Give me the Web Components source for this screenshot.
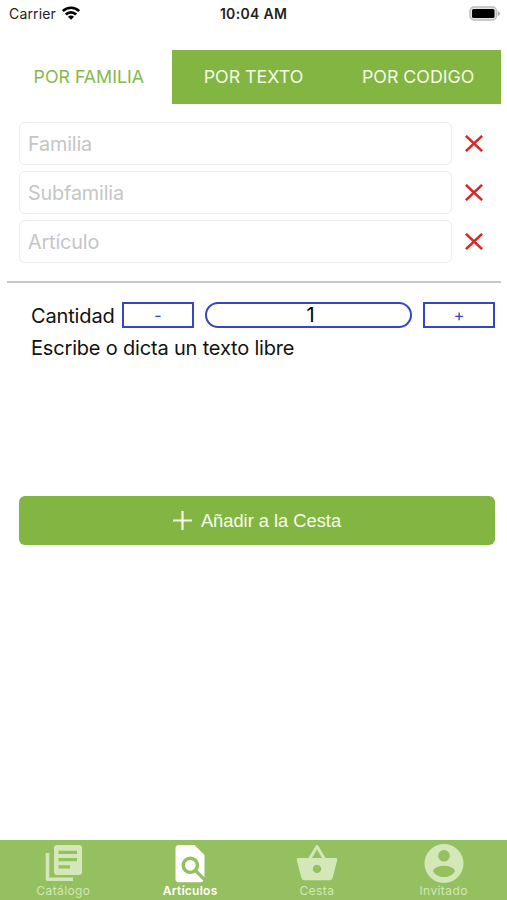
<!DOCTYPE html>
<html lang="es">
<head>
<meta charset="utf-8">
<title>Artículos</title>
<style>
  body {
    margin: 0;
    background: #fff;
    font-family: Inter, "Liberation Sans", sans-serif;
    color: #111;
  }
</style>
</head>
<body>
<articulos-app></articulos-app>

<script>
class StatusBar extends HTMLElement {
  constructor() {
    super();
    this.attachShadow({ mode: 'open' }).innerHTML = `
      <style>
        :host {
          display: grid;
          grid-template-columns: 1fr auto 1fr;
          align-items: center;
          box-sizing: border-box;
          height: 28px;
          padding: 0 7px 0 9px;
          font-size: 14px;
          line-height: 28px;
          color: #222;
        }
        .left { display: flex; align-items: center; gap: 6px; }
        .carrier { letter-spacing: 0.15px; }
        .time { font-size: 14px; font-weight: 600; letter-spacing: 0.3px; margin-right: 2px; }
        .left svg { margin-top: -3px; }
        .battery { justify-self: end; margin-top: -2px; }
        svg { display: block; }
      </style>
      <div class="left">
        <span class="carrier">Carrier</span>
        <svg width="18" height="14" viewBox="0 0 18 14" fill="none" stroke="#000" stroke-width="2.7">
          <path d="M.9 5.1C5.4.6 12.6.6 17.1 5.1"/>
          <path d="M3.8 8.5C6.7 5.6 11.3 5.6 14.2 8.5"/>
          <path d="M5.9 10.7C7.7 9.1 10.3 9.1 12.1 10.7L9 13.8Z" fill="#000" stroke="none"/>
        </svg>
      </div>
      <span class="time">10:04 AM</span>
      <svg class="battery" width="31" height="15" viewBox="0 0 31 15">
        <rect x="1" y="1" width="26.5" height="13" rx="4" fill="#e4e4e4" stroke="#bcbcbc" stroke-width="1.4"/>
        <rect x="3" y="3" width="22.5" height="9" rx="1.5" fill="#000"/>
        <path d="M28.8 5Q31 6 31 7.5T28.8 10Z" fill="#aaa"/>
      </svg>
    `;
  }
}

class SegmentTabs extends HTMLElement {
  constructor() {
    super();
    this.attachShadow({ mode: 'open' }).innerHTML = `
      <style>
        :host {
          display: grid;
          grid-template-columns: repeat(3, 1fr);
          height: 54px;
          margin: 22px 6px 0 7px;
        }
        ::slotted(*) {
          display: flex;
          align-items: center;
          justify-content: center;
          box-sizing: border-box;
          padding: 0 1px 1px 0;
          background: #82b541;
          color: #f6fbe9;
          font-size: 17.8px;
        }
        ::slotted([active]) {
          background: #fff;
          color: #86b74a;
        }
      </style>
      <slot></slot>
    `;
  }
}

class PickerField extends HTMLElement {
  constructor() {
    super();
    this.attachShadow({ mode: 'open' }).innerHTML = `
      <style>
        :host { display: flex; align-items: center; gap: 13px; }
        .box {
          box-sizing: border-box;
          width: 433px;
          height: 43px;
          padding-left: 8px;
          border: 1px solid #ececec;
          border-radius: 6px;
          font-size: 19.8px;
          line-height: 42px;
          letter-spacing: -0.15px;
          color: #c5c5c7;
        }
        svg { display: block; }
      </style>
      <div class="box"><slot></slot></div>
      <svg width="18" height="17" viewBox="0 0 18 17" stroke="#dc2626" stroke-width="2.6">
        <path d="M.9.9 17.1 16.1M17.1.9.9 16.1"/>
      </svg>
    `;
  }
}

class QuantityStepper extends HTMLElement {
  constructor() {
    super();
    this.attachShadow({ mode: 'open' }).innerHTML = `
      <style>
        :host {
          display: flex;
          align-items: center;
          height: 26px;
          margin: 18px 12px 0 31px;
          font-size: 20px;
          color: #111;
        }
        .label {
          width: 91px;
          box-sizing: border-box;
          padding-top: 1px;
          letter-spacing: -0.15px;
          white-space: nowrap;
        }
        .step, .value {
          box-sizing: border-box;
          height: 26px;
          border: 2.4px solid #3546c4;
          border-width: 2px;
          line-height: 23px;
          text-align: center;
        }
        .step { width: 72px; font-size: 16px; color: #3546c4; }
        .value { flex: 1; margin: 0 11px; padding-left: 4px; border-radius: 13px; color: #000; }
      </style>
      <span class="label"><slot></slot></span>
      <div class="step">-</div>
      <div class="value">1</div>
      <div class="step">+</div>
    `;
  }
}

class CartButton extends HTMLElement {
  constructor() {
    super();
    this.attachShadow({ mode: 'open' }).innerHTML = `
      <style>
        :host {
          display: flex;
          align-items: center;
          justify-content: center;
          gap: 9px;
          height: 49px;
          margin: 0 12px 0 19px;
          border-radius: 6px;
          background: #82b541;
          color: #f8fdec;
          font: 18.3px "Liberation Sans", Arial, sans-serif;
        }
        svg { display: block; }
      </style>
      <svg width="19" height="19" viewBox="0 0 19 19" stroke="#f8fdec" stroke-width="2.2">
        <path d="M9.5 0V19M0 9.5H19"/>
      </svg>
      <slot></slot>
    `;
  }
}

const icons = {
  catalogo: `
    <path d="M5.5 11V37.2H31" fill="none" stroke="currentColor" stroke-width="3.6" stroke-linejoin="round"/>
    <path fill="currentColor" fill-rule="evenodd" d="M15 3H37Q40 3 40 6V30Q40 33 37 33H15Q12 33 12 30V6Q12 3 15 3ZM16.5 8.8V12H35V8.8ZM16.5 16V19.2H35V16ZM16.5 23.3V26.5H28V23.3Z"/>`,
  articulos: `
    <path fill="currentColor" d="M10 3H25.5L35.5 13V37.5L33.5 39.6Q33 40.2 32 40.2H10Q6.5 40.2 6.5 37V6.5Q6.5 3 10 3Z"/>
    <path fill="none" stroke="#95c05f" stroke-width="3.4" d="M21.3 16.2A7.1 7.1 0 1 0 21.3 30.4A7.1 7.1 0 1 0 21.3 16.2M26.3 28.4 36.8 38.9"/>`,
  cesta: `
    <path fill="none" stroke="currentColor" stroke-width="3" stroke-linejoin="round" d="M13.6 17 21 4.6 28.4 17"/>
    <path fill="currentColor" fill-rule="evenodd" d="M2 16H40Q41.6 16 41.2 18L36.6 36Q35.8 38.2 33.5 38.2H8.5Q6.2 38.2 5.4 36L.8 18Q.4 16 2 16ZM21 22.7A4.2 4.2 0 1 0 21 31.1A4.2 4.2 0 1 0 21 22.7Z"/>`,
  invitado: `
    <path fill="currentColor" fill-rule="evenodd" d="M21 2A19.5 19.5 0 1 0 21 41A19.5 19.5 0 1 0 21 2ZM21 8A5.8 5.8 0 1 1 21 19.6A5.8 5.8 0 1 1 21 8ZM21 23.8C25 23.8 32 25.8 32 29.5C29.8 33 25.8 35 21 35S12.2 33 10 29.5C10 25.8 17 23.8 21 23.8Z"/>`
};

class NavItem extends HTMLElement {
  constructor() {
    super();
    this.attachShadow({ mode: 'open' }).innerHTML = `
      <style>
        :host {
          display: flex;
          flex-direction: column;
          align-items: center;
          padding-top: 2px;
          color: #d3e7b9;
          font-size: 12px;
          line-height: 14px;
          letter-spacing: 0.4px;
        }
        :host([active]) { color: #fff; font-weight: 600; letter-spacing: 0.25px; }
        svg { display: block; }
      </style>
      <svg width="42" height="42" viewBox="0 0 42 42">${icons[this.getAttribute('icon')]}</svg>
      <slot></slot>
    `;
  }
}

class BottomNav extends HTMLElement {
  constructor() {
    super();
    this.attachShadow({ mode: 'open' }).innerHTML = `
      <style>
        :host {
          display: grid;
          grid-template-columns: repeat(4, 1fr);
          height: 60px;
          background: #95c05f;
        }
      </style>
      <slot></slot>
    `;
  }
}

class ArticulosApp extends HTMLElement {
  constructor() {
    super();
    this.attachShadow({ mode: 'open' }).innerHTML = `
      <style>
        :host {
          display: flex;
          flex-direction: column;
          height: 900px;
          overflow: hidden;
        }
        .fields {
          display: grid;
          gap: 6px;
          margin: 18px 0 0 19px;
        }
        hr {
          width: 494px;
          height: 2px;
          margin: 18px 0 0 7px;
          border: 0;
          background: #c8c8c8;
        }
        quantity-stepper { margin-top: 19px; }
        .free-text {
          height: 148px;
          padding: 7px 0 0 31px;
          box-sizing: border-box;
          margin-bottom: 20px;
          font-size: 20px;
          line-height: 26px;
          letter-spacing: -0.18px;
        }
        bottom-nav { margin-top: auto; }
      </style>
      <status-bar></status-bar>
      <segment-tabs>
        <span active>POR FAMILIA</span>
        <span>POR TEXTO</span>
        <span>POR CODIGO</span>
      </segment-tabs>
      <div class="fields">
        <picker-field>Familia</picker-field>
        <picker-field>Subfamilia</picker-field>
        <picker-field>Artículo</picker-field>
      </div>
      <hr>
      <quantity-stepper>Cantidad</quantity-stepper>
      <div class="free-text">Escribe o dicta un texto libre</div>
      <cart-button>Añadir a la Cesta</cart-button>
      <bottom-nav>
        <nav-item icon="catalogo">Catálogo</nav-item>
        <nav-item icon="articulos" active>Artículos</nav-item>
        <nav-item icon="cesta">Cesta</nav-item>
        <nav-item icon="invitado">Invitado</nav-item>
      </bottom-nav>
    `;
  }
}

customElements.define('status-bar', StatusBar);
customElements.define('segment-tabs', SegmentTabs);
customElements.define('picker-field', PickerField);
customElements.define('quantity-stepper', QuantityStepper);
customElements.define('cart-button', CartButton);
customElements.define('nav-item', NavItem);
customElements.define('bottom-nav', BottomNav);
customElements.define('articulos-app', ArticulosApp);
</script>
</body>
</html>
